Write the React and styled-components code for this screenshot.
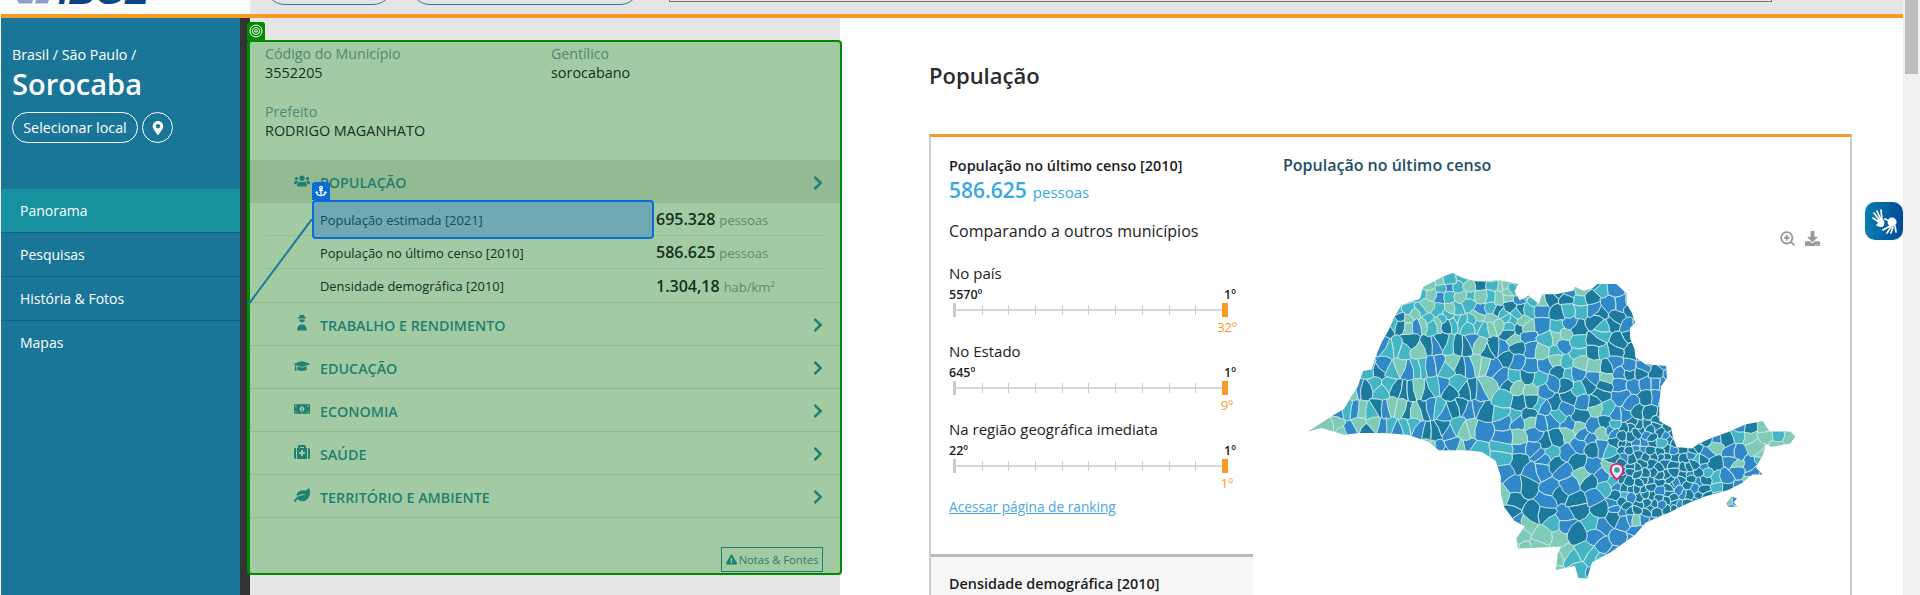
import React, { useMemo } from 'react';
import styled, { createGlobalStyle } from 'styled-components';
import {
  FaUsers, FaGraduationCap, FaMoneyBillAlt, FaMedkit, FaLeaf, FaChevronRight,
  FaAnchor, FaExclamationTriangle, FaMapMarkerAlt, FaDownload,
} from 'react-icons/fa';
import { ZoomIn } from 'lucide-react';

const GlobalStyle = createGlobalStyle`
  html, body { margin: 0; padding: 0; overflow: hidden; }
  body { font-family: "Open Sans", "Liberation Sans", sans-serif; background: #fff; }
  * { box-sizing: border-box; }
`;

const Root = styled.div`
  display: flex;
  height: 595px;
  padding-left: 1px;
  overflow: hidden;
  background: #fff;
`;

const Page = styled.div`
  flex: 1;
  min-width: 0;
  display: flex;
  flex-direction: column;
`;

const Scrollbar = styled.div`
  width: 17px;
  padding: 0 2px;
  background: #f0f0f0;
  &::before {
    content: '';
    display: block;
    height: 74px;
    background: #bdbdbd;
  }
`;

/* top bar: the page is scrolled, only the bottom slice of it shows */
const TopBar = styled.header`
  flex: none;
  display: flex;
  height: 18px;
  border-bottom: 4px solid #f99a26;
  background: #e5e5e5;
  overflow: hidden;
`;

const LogoBox = styled.div`
  flex: none;
  width: 249px;
  height: 14px;
  display: flex;
  padding-left: 14px;
  background: #fff;
`;

const LogoMark = styled.svg`
  flex: none;
  display: block;
  width: 36px;
  height: 5px;
`;

const LogoWord = styled.div`
  margin: -27px 0 0 7px;
  font: italic 700 37px/37px "Liberation Sans", sans-serif;
  color: #0d4487;
`;

const Pill = styled.div`
  flex: none;
  width: ${(p) => p.$width}px;
  height: 40px;
  margin: -35px 0 0 ${(p) => p.$gap}px;
  border: 1.5px solid #2c7f9f;
  border-radius: 20px;
`;

const SearchInput = styled.div`
  flex: none;
  width: 1103px;
  height: 20px;
  margin: -18px 0 0 29px;
  border: 1.5px solid #777;
  background: #e9e9e9;
`;

const Body = styled.div`
  flex: 1;
  min-height: 0;
  display: flex;
`;

const Sidebar = styled.aside`
  flex: none;
  width: 249px;
  border-right: 10px solid #333;
  background: #1a7698;
  color: #fff;
  padding-top: 28px;
`;

const Crumb = styled.div`
  padding-left: 11px;
  font-size: 14.3px;
  line-height: 18px;
`;

const CityName = styled.h1`
  margin: 1px 0 0;
  padding-left: 11px;
  font-size: 29px;
  font-weight: 600;
  line-height: 38px;
`;

const PlaceActions = styled.div`
  display: flex;
  gap: 4px;
  margin-top: 9px;
  padding-left: 11px;
`;

const OutlineButton = styled.div`
  display: flex;
  align-items: center;
  justify-content: center;
  height: 31px;
  width: ${(p) => p.$width}px;
  border: 1.5px solid #fff;
  border-radius: 16px;
  font-size: 14.3px;
`;

const SideNav = styled.nav`
  margin-top: 46px;
`;

const SideLink = styled.div`
  height: 44px;
  display: flex;
  align-items: center;
  padding: 0 0 1px 19px;
  font-size: 14px;
  background: ${(p) => (p.$active ? '#17919f' : 'transparent')};
  border-bottom: ${(p) => (p.$last ? 'none' : '1px solid #14607c')};
`;

const GreyColumn = styled.div`
  flex: none;
  width: 590px;
  padding-top: 4px;
  background: #e5e5e5;
  position: relative;
  z-index: 1;
`;

const InspectTag = styled.div`
  width: 18px;
  height: 18px;
  margin-left: -3px;
  display: flex;
  align-items: center;
  justify-content: center;
  background: #008a00;
  border-radius: 3px 3px 0 0;
`;

const Panel = styled.section`
  position: relative;
  width: 595px;
  margin-left: -3px;
  border: solid #008a00;
  border-width: 2px 2px 2px 3px;
  border-radius: 4px;
  background: #a3cba3;
  color: #14301f;
`;

const InfoGrid = styled.div`
  display: grid;
  grid-template-columns: 286px 1fr;
  row-gap: 20px;
  padding: 2px 15px 20px;
`;

const InfoItem = styled.div`
  min-height: 38px;
`;

const InfoLabel = styled.div`
  font-size: 14.2px;
  line-height: 19px;
  color: #4c8a74;
`;

const InfoValue = styled.div`
  font-size: 14.4px;
  line-height: 19px;
`;

const Band = styled.div`
  height: 43px;
  display: flex;
  align-items: center;
  padding: 2px 14px 0 44px;
  color: #1f7f72;
  background: ${(p) => (p.$open ? '#93ba93' : 'transparent')};
  border-bottom: ${(p) => (p.$open ? 'none' : '1px solid #8fb98f')};
`;

const BandIcon = styled.span`
  flex: none;
  width: 26px;
  height: 16px;
  margin-bottom: 4px;
  font-size: 16px;
  line-height: 16px;
  svg { display: block; }
`;

const BandTitle = styled.span`
  flex: 1;
  font-size: 14.3px;
  font-weight: 600;
  text-transform: uppercase;
`;

const IndicatorRow = styled.div`
  height: ${(p) => (p.$last ? 34 : 33)}px;
  display: flex;
  align-items: center;
  margin: 0 15px;
  padding-left: 47px;
  border-bottom: 1px solid ${(p) => (p.$last ? '#8fb98f' : '#95c095')};
  ${(p) => p.$last && 'margin: 0; padding-left: 62px;'}
`;

const IndicatorName = styled.div`
  position: relative;
  flex: none;
  width: 342px;
  height: ${(p) => (p.$selected ? 39 : 33)}px;
  display: flex;
  align-items: center;
  padding: 1px 0 0 8px;
  font-size: 12.9px;
  ${(p) => p.$selected && `
    padding-left: 6px;
    border: 2px solid #0a6cd6;
    border-radius: 4px;
    background: #70a9b3;
    color: #17495a;
    z-index: 1;
  `}
`;

const AnchorTag = styled.span`
  position: absolute;
  left: -2px;
  top: -20px;
  width: 18px;
  height: 18px;
  display: flex;
  align-items: center;
  justify-content: center;
  background: #0a6cd6;
  border-radius: 3px 3px 0 0;
  color: #fff;
  font-size: 12px;
`;

const IndicatorValue = styled.div`
  padding-left: 2px;
  font-size: 16px;
  font-weight: 600;
  white-space: nowrap;
`;

const IndicatorUnit = styled.span`
  margin-left: 4px;
  font-size: 13px;
  font-weight: 400;
  color: #5f8b68;
`;

const LinkLine = styled.svg`
  position: absolute;
  left: -2px;
  top: 177px;
  width: 64px;
  height: 86px;
  z-index: 2;
`;

const PanelFoot = styled.div`
  display: flex;
  justify-content: flex-end;
  padding: 29px 17px 1px 0;
`;

const NotesButton = styled.div`
  width: 102px;
  height: 25px;
  display: flex;
  align-items: center;
  justify-content: center;
  gap: 2px;
  border: 1px solid #1f7f72;
  font-size: 11.2px;
  color: #1f7f72;
`;

const Main = styled.main`
  position: relative;
  flex: 1;
  min-width: 0;
  padding: 44px 51px 0 89px;
`;

const SectionTitle = styled.h2`
  margin: 0 0 45px;
  font-size: 22px;
  font-weight: 600;
  line-height: 27px;
  color: #2b2b2b;
`;

const Card = styled.div`
  display: flex;
  height: 500px;
  border-top: 3px solid #f99a26;
  border-left: 2px solid #ccc;
  border-right: 2px solid #ccc;
`;

const CardLeft = styled.div`
  flex: none;
  width: 322px;
`;

const Facts = styled.div`
  padding: 20px 17px 0 18px;
  height: 417px;
`;

const FactTitle = styled.div`
  font-size: 14.4px;
  font-weight: 600;
  line-height: 18px;
  color: #1c1c1c;
`;

const FactValue = styled.div`
  margin-top: 1px;
  font-size: 21px;
  font-weight: 600;
  line-height: 28px;
  color: #37a9e1;
`;

const FactUnit = styled.span`
  margin-left: 6px;
  font-size: 15px;
  font-weight: 500;
`;

const CompareTitle = styled.div`
  margin-top: 14px;
  font-size: 16px;
  line-height: 22px;
  color: #222;
`;

const RankBlock = styled.div`
  margin-top: ${(p) => p.$top}px;
  width: 288px;
`;

const RankName = styled.div`
  font-size: 15px;
  line-height: 20px;
  color: #222;
`;

const RankEnds = styled.div`
  display: flex;
  justify-content: space-between;
  margin-top: 4px;
  padding-right: 1px;
  font-size: 12.5px;
  font-weight: 600;
  line-height: 16px;
  color: #1c1c1c;
`;

const RankTrack = styled.div`
  width: 275px;
  height: 14px;
  margin: 0 0 0 4px;
  display: flex;
  align-items: center;
  justify-content: space-between;
  background: linear-gradient(#d8d8d8, #d8d8d8) center / 100% 2px no-repeat;
`;

const TrackStart = styled.i`
  width: 3px;
  height: 14px;
  background: #ccc;
`;

const TrackTick = styled.i`
  width: 1px;
  height: 10px;
  background: #ccc;
`;

const TrackHandle = styled.i`
  width: 6px;
  height: 14px;
  background: #f99a26;
`;

const RankMine = styled.div`
  width: 20px;
  margin: 2px 0 0 auto;
  text-align: center;
  font-size: 13px;
  line-height: 17px;
  color: #f99a26;
`;

const RankingLink = styled.a`
  display: block;
  margin-top: 5px;
  font-size: 13.7px;
  line-height: 19px;
  color: #4ba9e0;
  text-decoration: underline;
`;

const NextFact = styled.div`
  height: 80px;
  padding: 18px 18px;
  background: #f7f7f7;
  border-top: 3px solid #b8b8b8;
`;

const CardRight = styled.div`
  flex: 1;
  min-width: 0;
  padding: 18px 30px 0;
`;

const MapTitle = styled.div`
  font-size: 16px;
  font-weight: 600;
  line-height: 20px;
  color: #1d4f63;
`;

const MapTools = styled.div`
  display: flex;
  justify-content: flex-end;
  align-items: center;
  gap: 9px;
  margin-top: 54px;
  height: 18px;
  color: #999;
`;

const MapDrawing = styled.svg`
  display: block;
  width: 503px;
  height: 317px;
  margin: 19px 0 0 18px;
  filter: blur(0.3px);
`;

const LibrasButton = styled.div`
  position: absolute;
  right: 0;
  top: 184px;
  width: 38px;
  height: 38px;
  display: flex;
  align-items: center;
  justify-content: center;
  border-radius: 10px;
  background: linear-gradient(90deg, #0a7eb0, #004a99);
`;

/* --- map of the state, traced from the picture, municipalities generated --- */
const OUTLINE = [
  [80,620],[120,595],[150,575],[185,555],[205,520],[225,490],[240,445],[265,440],[280,395],[295,360],[315,325],[330,290],
  [350,255],[375,245],[405,235],[415,200],[445,185],[475,170],[500,160],[530,175],[570,185],[640,182],[690,192],[680,215],
  [695,240],[720,225],[750,250],[760,222],[800,222],[850,212],[855,200],[880,212],[905,205],[920,192],[975,192],[1005,220],
  [1005,250],[1020,275],[1030,305],[1015,320],[1015,350],[1030,385],[1030,405],[1060,425],[1120,430],[1122,465],[1105,490],
  [1100,540],[1100,590],[1135,610],[1140,640],[1150,665],[1195,670],[1215,655],[1250,640],[1300,622],[1350,600],[1400,590],
  [1420,620],[1480,620],[1495,635],[1480,655],[1425,665],[1410,655],[1400,690],[1380,725],[1400,745],[1370,745],[1340,770],
  [1300,790],[1230,810],[1180,830],[1120,860],[1060,885],[1030,920],[960,970],[905,1000],[890,1048],[865,1045],[855,1010],
  [800,1022],[805,975],[815,955],[690,960],[685,930],[710,895],[680,880],[650,840],[640,800],[640,750],[625,705],[585,680],
  [540,675],[460,675],[430,650],[370,630],[300,625],[230,625],[185,630],[120,610],
];
const ISLAND = [[1295,830],[1310,810],[1325,815],[1315,825],[1325,838],[1300,838]];
const COLORS = ['#3189c9', '#1b7a9e', '#44b5c4', '#7fcbb8'];

function seeded(seed) {
  let s = seed;
  return () => {
    s = (s * 1664525 + 1013904223) % 4294967296;
    return s / 4294967296;
  };
}

function pickColor(x, y, r) {
  let w = [5, 3, 2, 1.5];
  if (x > 1340 && y < 680) w = [1, 3, 3, 4];
  else if (x > 1340) w = [7, 2, 1, 0.5];
  else if (x < 830 && y > 890) w = [1, 0, 1, 8];
  else if (y > 965) w = [2, 0, 7, 0.5];
  else if (y > 860) w = [9, 1.5, 0.5, 0.5];
  else if (x > 980 && x < 1230 && y > 560) w = [2.5, 8, 0.2, 0];
  else if (x > 950 && y < 560) w = [5, 5, 0.8, 0.5];
  else if (x < 720 && y < 330) w = [1.5, 1, 5, 4];
  else if (x < 640) w = [6, 2.5, 2.5, 2.5];
  else if (y > 690 && x < 1000) w = [6, 5, 0.3, 0.5];
  const total = w[0] + w[1] + w[2] + w[3];
  let v = r * total;
  for (let i = 0; i < 4; i++) {
    v -= w[i];
    if (v <= 0) return i;
  }
  return 0;
}

function buildSites() {
  const rnd = seeded(20210);
  const sites = [];
  const add = (x, y) => sites.push([x, y]);
  // long thin municipalities in the west
  for (let y = 300; y < 680; y += 60) {
    for (let x = 190; x < 640; x += 22) {
      add(x + (y - 300) * -0.18 + rnd() * 8, y + rnd() * 26);
    }
  }
  for (let y = 160; y < 300; y += 30) {
    for (let x = 330; x < 720; x += 30) add(x + rnd() * 22, y + rnd() * 22);
  }
  // middle and east
  for (let y = 190; y < 1060; y += 36) {
    for (let x = 640; x < 1500; x += 36) {
      if (x > 960 && x < 1230 && y > 600 && y < 880) continue;
      const big = y > 690 && x < 960;
      if (big && (Math.round(x / 36) + Math.round(y / 36)) % 3 === 0) continue;
      add(x + rnd() * 28, y + rnd() * 28);
    }
  }
  // dense capital area
  for (let y = 600; y < 880; y += 22) {
    for (let x = 960; x < 1230; x += 22) add(x + rnd() * 18, y + rnd() * 18);
  }
  return sites;
}

function clipHalf(poly, ax, ay, bx, by) {
  const mx = (ax + bx) / 2;
  const my = (ay + by) / 2;
  const nx = bx - ax;
  const ny = by - ay;
  const out = [];
  for (let i = 0; i < poly.length; i++) {
    const p = poly[i];
    const q = poly[(i + 1) % poly.length];
    const dp = (p[0] - mx) * nx + (p[1] - my) * ny;
    const dq = (q[0] - mx) * nx + (q[1] - my) * ny;
    if (dp <= 0) out.push(p);
    if ((dp < 0 && dq > 0) || (dp > 0 && dq < 0)) {
      const t = dp / (dp - dq);
      out.push([p[0] + (q[0] - p[0]) * t, p[1] + (q[1] - p[1]) * t]);
    }
  }
  return out;
}

// bends an edge the same way for both cells that share it
function bentPoint(p, q) {
  const mx = (p[0] + q[0]) / 2;
  const my = (p[1] + q[1]) / 2;
  const key = Math.round(mx / 2) * 31 + Math.round(my / 2) * 17;
  const h = Math.sin(key * 12.9898) * 43758.5453;
  const off = (h - Math.floor(h) - 0.5) * 10;
  const [a, b] = p[0] < q[0] || (p[0] === q[0] && p[1] < q[1]) ? [p, q] : [q, p];
  const dx = b[0] - a[0];
  const dy = b[1] - a[1];
  const len = Math.hypot(dx, dy) || 1;
  if (len < 8) return null;
  return [mx - (dy / len) * off, my + (dx / len) * off];
}

function buildCells() {
  const sites = buildSites();
  const rnd = seeded(77);
  const paths = ['', '', '', ''];
  sites.forEach(([x, y], i) => {
    let poly = [[x - 140, y - 140], [x + 140, y - 140], [x + 140, y + 140], [x - 140, y + 140]];
    sites.forEach(([ox, oy], j) => {
      if (i === j || Math.abs(ox - x) > 200 || Math.abs(oy - y) > 200) return;
      if (poly.length) poly = clipHalf(poly, x, y, ox, oy);
    });
    const c = pickColor(x, y, rnd());
    if (poly.length > 2) {
      const pts = [];
      poly.forEach((p, k) => {
        pts.push(p);
        const mid = bentPoint(p, poly[(k + 1) % poly.length]);
        if (mid) pts.push(mid);
      });
      paths[c] += `M${pts.map((p) => `${p[0].toFixed(1)} ${p[1].toFixed(1)}`).join('L')}Z`;
    }
  });
  return paths;
}

const toPoints = (list) => list.map((p) => p.join(',')).join(' ');

function StateMap() {
  const cells = useMemo(buildCells, []);
  return (
    <MapDrawing viewBox="60 140 1460 920">
      <defs>
        <clipPath id="state-shape">
          <polygon points={toPoints(OUTLINE)} />
          <polygon points={toPoints(ISLAND)} />
        </clipPath>
      </defs>
      <polygon points={toPoints(ISLAND)} fill={COLORS[0]} />
      <g clipPath="url(#state-shape)">
        {cells.map((d, i) => (
          <path key={COLORS[i]} d={d} fill={COLORS[i]} stroke="#c4e6e6" strokeWidth="2.4" strokeLinejoin="round" />
        ))}
      </g>
      <path
        d="M977 714c-11 0-18 8-18 18 0 12 18 28 18 28s18-16 18-28c0-10-7-18-18-18z"
        fill="#dff1f2"
        stroke="#e8176f"
        strokeWidth="5"
      />
      <circle cx="977" cy="732" r="8" fill="#4d8fa3" />
    </MapDrawing>
  );
}

const WorkerIcon = () => (
  <svg width="16" height="16" viewBox="0 0 16 16" fill="currentColor">
    <path d="M5.8 0h4.4l.4 2.2h1.2v1.2H4V2.2h1.4zM5.2 4.4h5.6a2.8 2.8 0 0 1-5.6 0zM3.2 15.5c0-4.2 1.8-6 4.8-6s4.8 1.8 4.8 6z" />
  </svg>
);

const TargetIcon = () => (
  <svg width="14" height="14" viewBox="0 0 14 14" fill="none" stroke="#fff" strokeWidth="1">
    <circle cx="7" cy="7" r="6" />
    <circle cx="7" cy="7" r="3.6" />
    <circle cx="7" cy="7" r="1.3" />
  </svg>
);

const LibrasIcon = () => (
  <svg width="38" height="38" viewBox="0 0 38 38" stroke="#fff" strokeWidth="1.7" strokeLinecap="round" fill="#fff">
    <path d="M15 19 9 11M16 18 12 9M17 18 16 8M14 20 8 16M15 24l-3-1" />
    <ellipse cx="16" cy="21" rx="3.4" ry="4" stroke="none" />
    <path d="M25 24l-7 4M26 25l-4 6M28 25l-2 6M30 24l1 6M24 19l-4-2" />
    <ellipse cx="27" cy="20" rx="4.6" ry="4.4" stroke="none" />
    <path d="M22.6 19.5 20 23" stroke="#0a5fa5" strokeWidth="1" />
  </svg>
);

const THEMES = [
  { title: 'Trabalho e Rendimento', icon: <WorkerIcon /> },
  { title: 'Educação', icon: <FaGraduationCap /> },
  { title: 'Economia', icon: <FaMoneyBillAlt /> },
  { title: 'Saúde', icon: <FaMedkit /> },
  { title: 'Território e Ambiente', icon: <FaLeaf /> },
];

const INDICATORS = [
  { name: 'População estimada [2021]', value: '695.328', unit: 'pessoas', selected: true },
  { name: 'População no último censo [2010]', value: '586.625', unit: 'pessoas' },
  { name: 'Densidade demográfica [2010]', value: '1.304,18', unit: 'hab/km²', last: true },
];

const RANKS = [
  { name: 'No país', from: '5570º', mine: '32º', top: 21 },
  { name: 'No Estado', from: '645º', mine: '9º', top: 5 },
  { name: 'Na região geográfica imediata', from: '22º', mine: '1º', top: 5 },
];

function Rank({ name, from, mine, top }) {
  return (
    <RankBlock $top={top}>
      <RankName>{name}</RankName>
      <RankEnds>
        <span>{from}</span>
        <span>1º</span>
      </RankEnds>
      <RankTrack>
        <TrackStart />
        {Array.from({ length: 9 }, (_, i) => <TrackTick key={i} />)}
        <TrackHandle />
      </RankTrack>
      <RankMine>{mine}</RankMine>
    </RankBlock>
  );
}

export default function App() {
  return (
    <Root>
      <GlobalStyle />
      <Page>
        <TopBar>
          <LogoBox>
            <LogoMark viewBox="0 0 36 5">
              <path d="M2 0h16l-1 3.5H4z M21 0h13l-1.5 3.5H20z" fill="#8e9fcb" />
            </LogoMark>
            <LogoWord>IBGE</LogoWord>
          </LogoBox>
          <Pill $width={128} $gap={15} />
          <Pill $width={230} $gap={17} />
          <SearchInput />
        </TopBar>
        <Body>
          <Sidebar>
            <Crumb>Brasil / São Paulo /</Crumb>
            <CityName>Sorocaba</CityName>
            <PlaceActions>
              <OutlineButton $width={126}>Selecionar local</OutlineButton>
              <OutlineButton $width={31}><FaMapMarkerAlt size={14} /></OutlineButton>
            </PlaceActions>
            <SideNav>
              <SideLink $active>Panorama</SideLink>
              <SideLink>Pesquisas</SideLink>
              <SideLink>História &amp; Fotos</SideLink>
              <SideLink $last>Mapas</SideLink>
            </SideNav>
          </Sidebar>
          <GreyColumn>
            <InspectTag><TargetIcon /></InspectTag>
            <Panel>
              <InfoGrid>
                <InfoItem>
                  <InfoLabel>Código do Município</InfoLabel>
                  <InfoValue>3552205</InfoValue>
                </InfoItem>
                <InfoItem>
                  <InfoLabel>Gentílico</InfoLabel>
                  <InfoValue>sorocabano</InfoValue>
                </InfoItem>
                <InfoItem>
                  <InfoLabel>Prefeito</InfoLabel>
                  <InfoValue>RODRIGO MAGANHATO</InfoValue>
                </InfoItem>
              </InfoGrid>
              <Band $open>
                <BandIcon><FaUsers /></BandIcon>
                <BandTitle>População</BandTitle>
                <FaChevronRight size={16} />
              </Band>
              {INDICATORS.map((row) => (
                <IndicatorRow key={row.name} $last={row.last}>
                  <IndicatorName $selected={row.selected}>
                    {row.selected && <AnchorTag><FaAnchor /></AnchorTag>}
                    {row.name}
                  </IndicatorName>
                  <IndicatorValue>
                    {row.value}
                    <IndicatorUnit>{row.unit}</IndicatorUnit>
                  </IndicatorValue>
                </IndicatorRow>
              ))}
              {THEMES.map((theme) => (
                <Band key={theme.title}>
                  <BandIcon>{theme.icon}</BandIcon>
                  <BandTitle>{theme.title}</BandTitle>
                  <FaChevronRight size={16} />
                </Band>
              ))}
              <PanelFoot>
                <NotesButton><FaExclamationTriangle size={11} />Notas &amp; Fontes</NotesButton>
              </PanelFoot>
              <LinkLine viewBox="0 0 64 86">
                <line x1="64" y1="0" x2="0" y2="86" stroke="#1a7b9e" strokeWidth="2" />
              </LinkLine>
            </Panel>
          </GreyColumn>
          <Main>
            <SectionTitle>População</SectionTitle>
            <Card>
              <CardLeft>
                <Facts>
                  <FactTitle>População no último censo [2010]</FactTitle>
                  <FactValue>586.625<FactUnit>pessoas</FactUnit></FactValue>
                  <CompareTitle>Comparando a outros municípios</CompareTitle>
                  {RANKS.map((rank) => <Rank key={rank.name} {...rank} />)}
                  <RankingLink>Acessar página de ranking</RankingLink>
                </Facts>
                <NextFact>
                  <FactTitle>Densidade demográfica [2010]</FactTitle>
                </NextFact>
              </CardLeft>
              <CardRight>
                <MapTitle>População no último censo</MapTitle>
                <MapTools>
                  <ZoomIn size={17} strokeWidth={2.6} />
                  <FaDownload size={15} />
                </MapTools>
                <StateMap />
              </CardRight>
            </Card>
            <LibrasButton><LibrasIcon /></LibrasButton>
          </Main>
        </Body>
      </Page>
      <Scrollbar />
    </Root>
  );
}
